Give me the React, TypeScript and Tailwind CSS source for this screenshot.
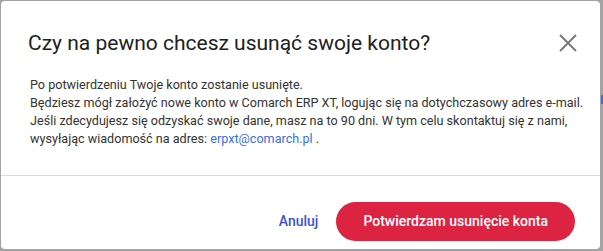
export default function App() {
    return (
        <div className="flex w-[603px] h-[251px] bg-[#a3a3a3] pl-px pt-px" style={{ fontFamily: "Roboto, 'Liberation Sans', sans-serif" }}>
            <div className="flex flex-col w-[599px] h-[248px] bg-white rounded-[4px]">
                <div className="flex justify-between items-start h-[75px] pl-[27px] pr-[22px] pt-[27px]">
                    <h1 className="text-[21px] leading-[30px] text-[#212121]">Czy na pewno chcesz usunąć swoje konto?</h1>
                    <button className="mt-[5px] text-[#7a7a7a]">
                        <svg width="20" height="20" viewBox="0 0 20 20" fill="none" stroke="currentColor" strokeWidth="2">
                            <path d="M2 2 L18 18 M18 2 L2 18" />
                        </svg>
                    </button>
                </div>
                <div className="px-[29px] text-[12.6px] leading-[18px] text-[#333333] whitespace-nowrap">
                    <p>Po potwierdzeniu Twoje konto zostanie usunięte.</p>
                    <p>Będziesz mógł założyć nowe konto w Comarch ERP XT, logując się na dotychczasowy adres e-mail.</p>
                    <p>Jeśli zdecydujesz się odzyskać swoje dane, masz na to 90 dni. W tym celu skontaktuj się z nami,</p>
                    <p>wysyłając wiadomość na adres: <a className="text-[#3b6fe0]">erpxt@comarch.pl</a> .</p>
                </div>
                <div className="flex-1"></div>
                <div className="flex justify-end items-start gap-[18px] h-[74px] border-t border-[#dcdcdc] pr-[25px] pt-[26px]">
                    <button className="h-[39px] text-[14px] font-medium text-[#3d4fd6]">Anuluj</button>
                    <button className="h-[39px] px-[27px] rounded-full bg-[#dc2342] text-white text-[14px] font-medium">Potwierdzam usunięcie konta</button>
                </div>
            </div>
            <div className="w-[3px] pt-[94px]">
                <div className="ml-[1px] w-[2px] h-[9px] bg-[#3b6fe0]"></div>
            </div>
        </div>
    )
}
